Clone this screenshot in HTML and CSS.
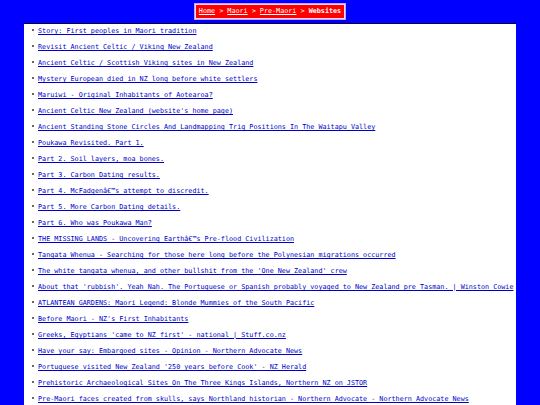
FILE: index.html
```html
<!DOCTYPE html>
<html>
<head>
<meta charset="utf-8">
<link rel="stylesheet" href="styles.css">
</head>
<body>
<div class="crumbbar">
  <div class="crumbs"><a href="#">Home</a> &gt; <a href="#">Maori</a> &gt; <a href="#">Pre-Maori</a> &gt; <b>Websites</b></div>
</div>
<div class="content">
<ul class="links">
<li><a href="#">Story: First peoples in Maori tradition</a></li>
<li><a href="#">Revisit Ancient Celtic / Viking New Zealand</a></li>
<li><a href="#">Ancient Celtic / Scottish Viking sites in New Zealand</a></li>
<li><a href="#">Mystery European died in NZ long before white settlers</a></li>
<li><a href="#">Maruiwi - Original Inhabitants of Aotearoa?</a></li>
<li><a href="#">Ancient Celtic New Zealand (website's home page)</a></li>
<li><a href="#">Ancient Standing Stone Circles And Landmapping Trig Positions In The Waitapu Valley</a></li>
<li><a href="#">Poukawa Revisited. Part 1.</a></li>
<li><a href="#">Part 2. Soil layers, moa bones.</a></li>
<li><a href="#">Part 3. Carbon Dating results.</a></li>
<li><a href="#">Part 4. McFadgenâ€™s attempt to discredit.</a></li>
<li><a href="#">Part 5. More Carbon Dating details.</a></li>
<li><a href="#">Part 6. Who was Poukawa Man?</a></li>
<li><a href="#">THE MISSING LANDS - Uncovering Earthâ€™s Pre-flood Civilization</a></li>
<li><a href="#">Tangata Whenua - Searching for those here long before the Polynesian migrations occurred</a></li>
<li><a href="#">The white tangata whenua, and other bullshit from the 'One New Zealand' crew</a></li>
<li><a href="#">About that 'rubbish'. Yeah Nah. The Portuguese or Spanish probably voyaged to New Zealand pre Tasman. | Winston Cowie</a></li>
<li><a href="#">ATLANTEAN GARDENS: Maori Legend: Blonde Mummies of the South Pacific</a></li>
<li><a href="#">Before Maori - NZ's First Inhabitants</a></li>
<li><a href="#">Greeks, Egyptians 'came to NZ first' - national | Stuff.co.nz</a></li>
<li><a href="#">Have your say: Embargoed sites - Opinion - Northern Advocate News</a></li>
<li><a href="#">Portuguese visited New Zealand '250 years before Cook' - NZ Herald</a></li>
<li><a href="#">Prehistoric Archaeological Sites On The Three Kings Islands, Northern NZ on JSTOR</a></li>
<li><a href="#">Pre-Maori faces created from skulls, says Northland historian - Northern Advocate - Northern Advocate News</a></li>
</ul>
</div>
</body>
</html>
```

FILE: styles.css
```css
html, body {
  margin: 0;
  padding: 0;
  background: #0000ff;
}
body {
  font-family: "DejaVu Sans Mono", "Liberation Mono", monospace;
  font-size: 6.75px;
}
.crumbbar {
  display: flex;
  justify-content: center;
  padding-top: 4px;
  height: 19px;
  box-sizing: border-box;
}
.crumbs {
  background: #ff0000;
  color: #ffffff;
  border: 1px solid #ffd6e0;
  box-shadow: 0 0 0 1px #c8a0ff;
  padding: 0 3px;
  line-height: 13px;
  height: 13px;
  white-space: nowrap;
}
.crumbs a {
  color: #ffffff;
}
.crumbs b {
  font-weight: bold;
}
.content {
  margin: 4px 24px 0 24px;
  background: #ffffff;
  border-top: 1px solid #000040;
  min-height: 390px;
  padding-top: 3px;
}
.links {
  margin: 0;
  padding: 0 0 0 14px;
  list-style: none;
}
.links li {
  line-height: 9px;
  margin-bottom: 7px;
  white-space: nowrap;
  color: #000000;
}
.links li::before {
  content: "";
  display: inline-block;
  width: 2px;
  height: 2px;
  border-radius: 50%;
  background: #333333;
  margin-left: -6px;
  margin-right: 4px;
  vertical-align: 2px;
}
.links a {
  color: #0000cc;
}
```
